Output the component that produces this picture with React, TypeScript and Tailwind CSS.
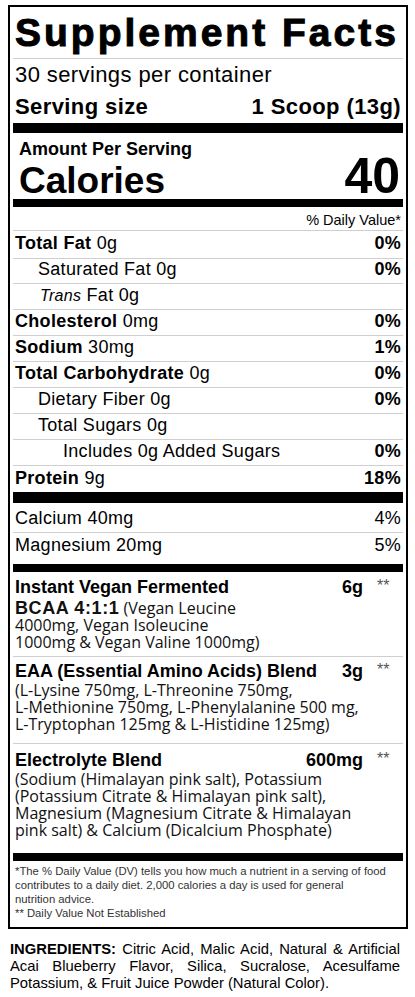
import React from 'react';

function Row({ children, dv, cls }: { children: React.ReactNode; dv?: string; cls: string }) {
  return (
    <div className={`flex justify-between border-b border-[#cfcfcf] px-[2px] text-[18px] leading-[21px] tracking-[0.3px] ${cls}`}>
      <div>{children}</div>
      {dv && <div className="font-bold">{dv}</div>}
    </div>
  );
}

function BlendHead({ name, amount }: { name: string; amount: string }) {
  return (
    <div className="flex items-start px-[2px]">
      <div className="flex-1 text-[18px] font-bold leading-[21px]">{name}</div>
      <div className="text-[18px] font-bold leading-[21px]">{amount}</div>
      <div className="w-[38px] pl-[14px] pt-[1px] text-[16px] leading-[16px] text-[#555]">**</div>
    </div>
  );
}

export default function App() {
  return (
    <div className="min-h-screen bg-white pt-[5px] text-black font-['Liberation_Sans',Arial,sans-serif]">
      {/* Facts panel */}
      <div className="ml-[8px] w-[400px] border-2 border-black px-[3px]">
        <div className="h-[52px] border-b border-[#cfcfcf] px-[2px] pt-[4px]">
          <h1 className="whitespace-nowrap text-[39px] font-black leading-[44px] tracking-[3px] [-webkit-text-stroke:1px_black]">
            Supplement Facts
          </h1>
        </div>

        <div className="px-[2px] pt-[3px] pb-[3px] text-[22px] leading-[26px] tracking-[0.4px]">
          <p>30 servings per container</p>
          <div className="mt-[6px] flex justify-between font-bold">
            <span>Serving size</span>
            <span>1 Scoop (13g)</span>
          </div>
        </div>
        <div className="h-[10px] bg-black" />

        <div className="h-[66px] pl-[6px] pr-[3px] pt-[6px]">
          <p className="text-[18px] font-bold leading-[20px]">Amount Per Serving</p>
          <div className="mt-[2px] flex items-baseline justify-between font-bold">
            <span className="text-[37px] leading-[30px]">Calories</span>
            <span className="text-[50px] leading-[30px]">40</span>
          </div>
        </div>
        <div className="h-[8px] bg-black" />

        <div className="h-[24px] border-b border-[#cfcfcf] px-[2px] pt-[5px] text-right text-[14.5px] leading-[16px]">
          % Daily Value*
        </div>

        <Row cls="h-[28px] pt-[2px]" dv="0%">
          <b>Total Fat</b> 0g
        </Row>
        <Row cls="h-[25px] pl-[25px]" dv="0%">
          Saturated Fat 0g
        </Row>
        <Row cls="h-[26px] pt-[1px] pl-[27px]">
          <i className="text-[16px]">Trans</i> Fat 0g
        </Row>
        <Row cls="h-[26px] pt-[1px]" dv="0%">
          <b>Cholesterol</b> 0mg
        </Row>
        <Row cls="h-[26px] pt-[1px]" dv="1%">
          <b>Sodium</b> 30mg
        </Row>
        <Row cls="h-[26px] pt-[1px]" dv="0%">
          <b>Total Carbohydrate</b> 0g
        </Row>
        <Row cls="h-[26px] pt-[1px] pl-[25px]" dv="0%">
          Dietary Fiber 0g
        </Row>
        <Row cls="h-[26px] pt-[1px] pl-[25px]">
          Total Sugars 0g
        </Row>
        <Row cls="h-[26px] pt-[1px] pl-[50px]" dv="0%">
          Includes 0g Added Sugars
        </Row>
        <div className="flex h-[26px] justify-between px-[2px] pt-[2px] text-[18px] leading-[21px] tracking-[0.3px]">
          <div>
            <b>Protein</b> 9g
          </div>
          <div className="font-bold">18%</div>
        </div>
        <div className="h-[11px] bg-black" />

        <div className="flex h-[30px] justify-between border-b border-[#cfcfcf] px-[2px] pt-[5px] text-[18px] leading-[21px] tracking-[0.3px]">
          <span>Calcium 40mg</span>
          <span>4%</span>
        </div>
        <div className="flex h-[31px] justify-between px-[2px] pt-[2px] text-[18px] leading-[21px] tracking-[0.3px]">
          <span>Magnesium 20mg</span>
          <span>5%</span>
        </div>
        <div className="h-[8px] bg-black" />

        {/* Blends */}
        <div className="h-[85px] border-b border-[#cfcfcf] pt-[5px]">
          <BlendHead name="Instant Vegan Fermented" amount="6g" />
          <p className="mt-[2px] px-[2px] text-[16px] leading-[17px] text-[#111] font-['Open_Sans',sans-serif]">
            <b className="text-[18px] tracking-[0.6px] font-['Liberation_Sans',Arial,sans-serif]">BCAA 4:1:1</b> (Vegan Leucine
            <br />
            4000mg, Vegan Isoleucine
            <br />
            1000mg &amp; Vegan Valine 1000mg)
          </p>
        </div>

        <div className="h-[87px] border-b border-[#cfcfcf] pt-[4px]">
          <BlendHead name="EAA (Essential Amino Acids) Blend" amount="3g" />
          <p className="px-[2px] text-[16px] leading-[17px] text-[#111] font-['Open_Sans',sans-serif]">
            (L-Lysine 750mg, L-Threonine 750mg,
            <br />
            L-Methionine 750mg, L-Phenylalanine 500 mg,
            <br />
            L-Tryptophan 125mg &amp; L-Histidine 125mg)
          </p>
        </div>

        <div className="h-[109px] pt-[6px]">
          <BlendHead name="Electrolyte Blend" amount="600mg" />
          <p className="px-[2px] text-[16px] leading-[17px] text-[#111] font-['Open_Sans',sans-serif]">
            (Sodium (Himalayan pink salt), Potassium
            <br />
            (Potassium Citrate &amp; Himalayan pink salt),
            <br />
            Magnesium (Magnesium Citrate &amp; Himalayan
            <br />
            pink salt) &amp; Calcium (Dicalcium Phosphate)
          </p>
        </div>
        <div className="h-[8px] bg-black" />

        <div className="h-[66px] whitespace-nowrap px-[2px] pt-[3px] text-[11.3px] leading-[14px] text-[#333]">
          *The % Daily Value (DV) tells you how much a nutrient in a serving of food
          <br />
          contributes to a daily diet. 2,000 calories a day is used for general
          <br />
          nutrition advice.
          <br />
          ** Daily Value Not Established
        </div>
      </div>

      {/* Ingredients */}
      <div className="ml-[10px] mt-[12px] w-[390px] text-[14.8px] leading-[17px]">
        <p className="text-justify [text-align-last:justify]">
          <b>INGREDIENTS:</b> Citric Acid, Malic Acid, Natural &amp; Artificial
        </p>
        <p className="text-justify [text-align-last:justify]">Acai Blueberry Flavor, Silica, Sucralose, Acesulfame</p>
        <p>Potassium, &amp; Fruit Juice Powder (Natural Color).</p>
      </div>
    </div>
  );
}
